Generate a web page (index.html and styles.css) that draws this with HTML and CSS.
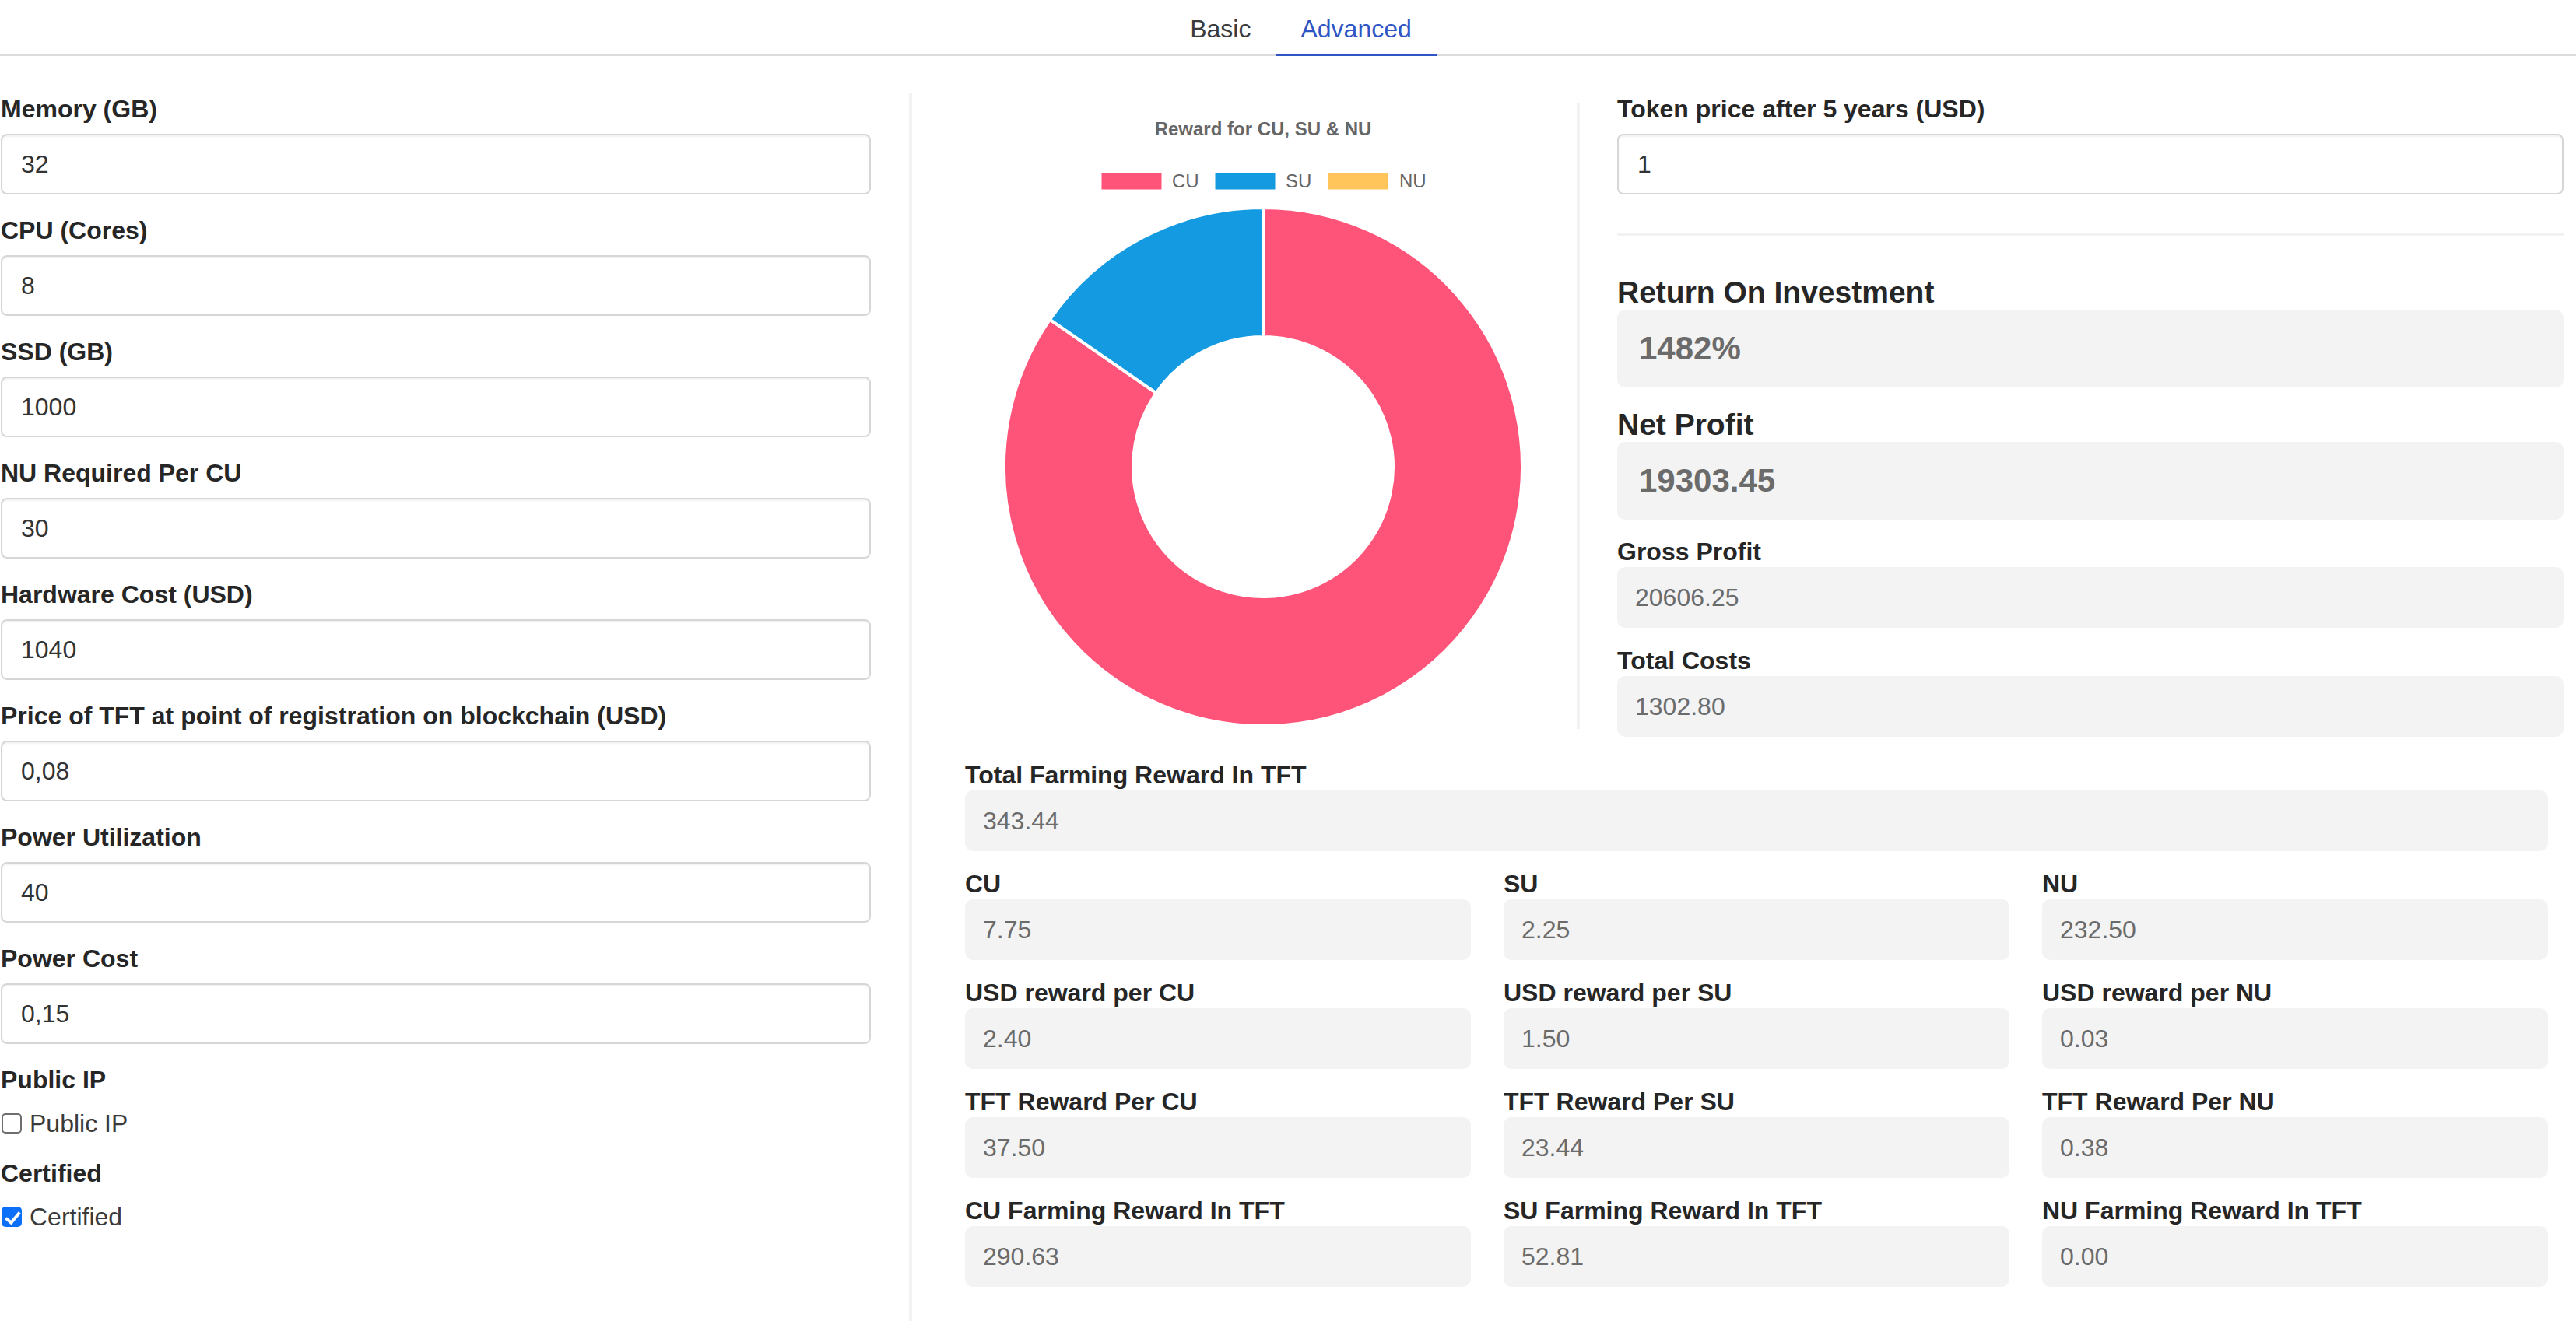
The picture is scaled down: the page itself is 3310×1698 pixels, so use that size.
FILE: index.html
```html
<!DOCTYPE html>
<html lang="en">
<head>
<meta charset="utf-8">
<title>Farming Calculator</title>
<link rel="stylesheet" href="styles.css">
</head>
<body>
<nav class="tabs">
  <div class="tab">Basic</div>
  <div class="tab active">Advanced</div>
</nav>
<div class="main">
  <form class="left">
    <div class="group"><label class="lbl">Memory (GB)</label><input class="field" type="text" value="32"></div>
    <div class="group"><label class="lbl">CPU (Cores)</label><input class="field" type="text" value="8"></div>
    <div class="group"><label class="lbl">SSD (GB)</label><input class="field" type="text" value="1000"></div>
    <div class="group"><label class="lbl">NU Required Per CU</label><input class="field" type="text" value="30"></div>
    <div class="group"><label class="lbl">Hardware Cost (USD)</label><input class="field" type="text" value="1040"></div>
    <div class="group"><label class="lbl">Price of TFT at point of registration on blockchain (USD)</label><input class="field" type="text" value="0,08"></div>
    <div class="group"><label class="lbl">Power Utilization</label><input class="field" type="text" value="40"></div>
    <div class="group"><label class="lbl">Power Cost</label><input class="field" type="text" value="0,15"></div>
    <div class="group-check">
      <div class="lbl">Public IP</div>
      <label class="check"><input class="box" type="checkbox"><span>Public IP</span></label>
    </div>
    <div class="group-check">
      <div class="lbl">Certified</div>
      <label class="check"><input class="box" type="checkbox" checked><span>Certified</span></label>
    </div>
  </form>
  <div class="right">
    <div class="top">
      <div class="chart-col">
        <svg class="chart" width="806" height="804" viewBox="0 0 806 804">
          <text class="chart-title" x="403" y="41" text-anchor="middle">Reward for CU, SU &amp; NU</text>
          <rect x="196" y="90" width="76" height="20" fill="#ff5479" stroke="#ff5479" stroke-width="1"/>
          <text class="legend" x="286" y="108">CU</text>
          <rect x="342" y="90" width="76" height="20" fill="#139ae1" stroke="#139ae1" stroke-width="1"/>
          <text class="legend" x="432" y="108">SU</text>
          <rect x="487" y="90" width="76" height="20" fill="#ffc55a" stroke="#ffc55a" stroke-width="1"/>
          <text class="legend" x="578" y="108">NU</text>
          <path d="M 403 134 A 333 333 0 1 1 129.0 277.7 L 265.6 372.1 A 167 167 0 1 0 403 300 Z" fill="#ff5479" stroke="#ffffff" stroke-width="4" stroke-linejoin="round"/>
          <path d="M 129.0 277.7 A 333 333 0 0 1 403 134 L 403 300 A 167 167 0 0 0 265.6 372.1 Z" fill="#139ae1" stroke="#ffffff" stroke-width="4" stroke-linejoin="round"/>
        </svg>
      </div>
      <div class="roi-col">
        <label class="lbl">Token price after 5 years (USD)</label>
        <input class="field" type="text" value="1">
        <hr class="sep">
        <h3 class="big-h">Return On Investment</h3>
        <div class="big-box">1482%</div>
        <h3 class="big-h">Net Profit</h3>
        <div class="big-box last">19303.45</div>
        <div class="res">
          <div class="rlbl">Gross Profit</div>
          <div class="rbox">20606.25</div>
        </div>
        <div class="res">
          <div class="rlbl">Total Costs</div>
          <div class="rbox">1302.80</div>
        </div>
      </div>
    </div>
    <div class="results">
      <div class="res">
        <div class="rlbl">Total Farming Reward In TFT</div>
        <div class="rbox">343.44</div>
      </div>
      <div class="grid">
        <div class="res"><div class="rlbl">CU</div><div class="rbox">7.75</div></div>
        <div class="res"><div class="rlbl">SU</div><div class="rbox">2.25</div></div>
        <div class="res"><div class="rlbl">NU</div><div class="rbox">232.50</div></div>
        <div class="res"><div class="rlbl">USD reward per CU</div><div class="rbox">2.40</div></div>
        <div class="res"><div class="rlbl">USD reward per SU</div><div class="rbox">1.50</div></div>
        <div class="res"><div class="rlbl">USD reward per NU</div><div class="rbox">0.03</div></div>
        <div class="res"><div class="rlbl">TFT Reward Per CU</div><div class="rbox">37.50</div></div>
        <div class="res"><div class="rlbl">TFT Reward Per SU</div><div class="rbox">23.44</div></div>
        <div class="res"><div class="rlbl">TFT Reward Per NU</div><div class="rbox">0.38</div></div>
        <div class="res"><div class="rlbl">CU Farming Reward In TFT</div><div class="rbox">290.63</div></div>
        <div class="res"><div class="rlbl">SU Farming Reward In TFT</div><div class="rbox">52.81</div></div>
        <div class="res"><div class="rlbl">NU Farming Reward In TFT</div><div class="rbox">0.00</div></div>
      </div>
    </div>
  </div>
</div>
</body>
</html>
```
FILE: styles.css
```css
* { box-sizing: border-box; }

html, body {
  margin: 0;
  padding: 0;
  background: #ffffff;
}

body {
  font-family: "Liberation Sans", Arial, Helvetica, sans-serif;
  font-size: 32px;
  color: #212529;
  width: 3310px;
  height: 1698px;
  overflow: hidden;
}

/* tabs */
.tabs {
  display: flex;
  justify-content: center;
  padding-left: 33px;
  height: 72px;
  border-bottom: 2px solid #dcdcdc;
}

.tab {
  height: 72px;
  padding: 0 32px;
  line-height: 74px;
  font-size: 32px;
  color: #3a3a3a;
  border-bottom: 2px solid transparent;
  white-space: nowrap;
}

.tab.active {
  color: #2f55c4;
  border-bottom-color: #2f55c4;
}

/* layout */
.main {
  display: flex;
  margin-top: 48px;
  min-height: 1578px;
}

.left {
  width: 1168px;
  flex: none;
  padding: 0 49px 0 1px;
  margin: 0;
}

.right {
  flex: 1;
  border-left: 4px solid #f2f2f2;
  display: flex;
  flex-direction: column;
}

/* form fields */
.lbl {
  display: block;
  font-weight: bold;
  font-size: 32px;
  line-height: 40px;
  height: 40px;
  color: #262626;
  white-space: nowrap;
}

.group {
  margin-bottom: 26px;
}

.field {
  display: block;
  width: 100%;
  height: 78px;
  margin-top: 12px;
  padding: 0 24px;
  font-family: "Liberation Sans", Arial, Helvetica, sans-serif;
  font-size: 32px;
  color: #333333;
  background: #ffffff;
  border: 2px solid #d6d6d6;
  border-radius: 8px;
  box-shadow: inset 0 2px 2px rgba(0, 0, 0, 0.05);
  outline: none;
}

.group-check {
  margin-bottom: 20px;
}

.check {
  display: flex;
  align-items: center;
  gap: 10px;
  height: 48px;
  margin-top: 12px;
  font-size: 32px;
  color: #3a3a3a;
  padding-left: 1px;
}

.box {
  appearance: none;
  -webkit-appearance: none;
  width: 26px;
  height: 26px;
  margin: 0;
  border: 2px solid #6e6e6e;
  border-radius: 5px;
  background: #ffffff;
  position: relative;
  flex: none;
}

.box:checked {
  background: #0b6ff7;
  border-color: #0b6ff7;
}

.box:checked::after {
  content: "";
  position: absolute;
  left: 7px;
  top: 1px;
  width: 7px;
  height: 15px;
  border-right: 4px solid #ffffff;
  border-bottom: 4px solid #ffffff;
  transform: rotate(40deg);
}

/* top row */
.top {
  display: flex;
  align-items: flex-start;
}

.chart-col {
  width: 858px;
  flex: none;
  height: 804px;
  margin-top: 13px;
  padding-left: 48px;
  border-right: 4px solid #f2f2f2;
}

.chart {
  display: block;
}

.chart-title {
  font-family: "Liberation Sans", Arial, Helvetica, sans-serif;
  font-size: 24px;
  font-weight: bold;
  fill: #666666;
}

.legend {
  font-family: "Liberation Sans", Arial, Helvetica, sans-serif;
  font-size: 24px;
  fill: #666666;
}

.roi-col {
  flex: 1;
  padding: 0 16px 0 48px;
}

.sep {
  border: 0;
  height: 3px;
  background: #f2f2f2;
  margin: 50px 0 51px;
}

.big-h {
  margin: 0;
  font-size: 39px;
  line-height: 44px;
  font-weight: bold;
  color: #262626;
  white-space: nowrap;
}

.big-box {
  height: 100px;
  display: flex;
  align-items: center;
  padding-left: 28px;
  background: #f3f3f3;
  border-radius: 10px;
  font-size: 42px;
  font-weight: bold;
  color: #6b6b6b;
  margin-bottom: 26px;
}

.big-box.last {
  margin-bottom: 21px;
}

/* results */
.res {
  margin-bottom: 22px;
}

.roi-col .res:last-child {
  margin-bottom: 0;
}

.rlbl {
  font-weight: bold;
  font-size: 32px;
  line-height: 40px;
  height: 40px;
  color: #262626;
  white-space: nowrap;
}

.rbox {
  height: 78px;
  display: flex;
  align-items: center;
  padding-left: 23px;
  background: #f3f3f3;
  border-radius: 10px;
  font-size: 32px;
  color: #6b6b6b;
}

.results {
  padding: 29px 36px 0 68px;
}

.grid {
  display: grid;
  grid-template-columns: repeat(3, 1fr);
  column-gap: 42px;
}
```
